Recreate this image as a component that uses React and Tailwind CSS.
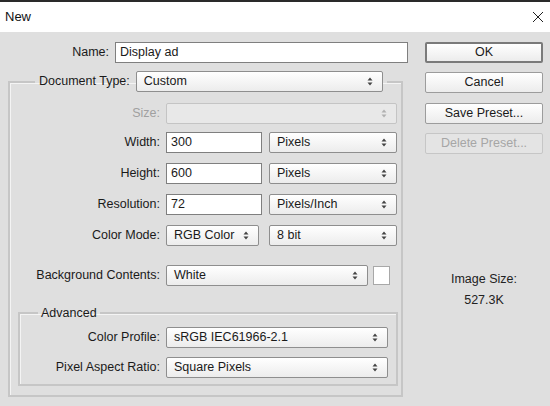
import React from 'react';

const font = { fontFamily: '"Liberation Sans", Arial, sans-serif' };

const Arrows = ({ dim }) => (
  <svg width="6" height="9" viewBox="0 0 6 9" className="shrink-0">
    <path d="M3 0.5 L5.5 3.5 L0.5 3.5 Z M3 8.5 L5.5 5.5 L0.5 5.5 Z" fill={dim ? '#b0b0b0' : '#444'} />
  </svg>
);

const Select = ({ value, w, disabled }) => (
  <div
    className={`h-[21px] ${w} flex items-center justify-between pl-[7px] pr-[9px] border rounded-[2px] ${
      disabled
        ? 'border-[#c4c4c4] bg-[#e8e8e8]'
        : 'border-[#8e8e8e] bg-gradient-to-b from-white to-[#ececec]'
    } text-[12.5px] text-[#1a1a1a]`}
  >
    <span>{value}</span>
    <Arrows dim={disabled} />
  </div>
);

const Input = ({ value, w }) => (
  <div className={`h-[21px] ${w} flex items-center px-[4px] bg-white border border-[#7f7f7f] text-[12.5px] text-[#1a1a1a]`}>
    {value}
  </div>
);

const Row = ({ label, labelW, children, className = '', dim }) => (
  <div className={`flex items-center ${className}`}>
    <div className={`${labelW} text-right pr-[6px] text-[12.5px] ${dim ? 'text-[#a0a0a0]' : 'text-[#1a1a1a]'}`}>{label}</div>
    {children}
  </div>
);

const Button = ({ children, primary, disabled, className = '' }) => (
  <div
    className={`h-[21px] w-[118px] flex items-center justify-center text-[12.5px] rounded-[2px] ${
      primary
        ? 'border-2 border-[#7a7a7a] bg-gradient-to-b from-white to-[#ececec] text-[#1a1a1a]'
        : disabled
        ? 'border border-[#c6c6c6] bg-[#e4e4e4] text-[#a6a6a6]'
        : 'border border-[#9c9c9c] bg-gradient-to-b from-white to-[#ececec] text-[#1a1a1a]'
    } ${className}`}
  >
    {children}
  </div>
);

export default function App() {
  return (
    <div className="w-[550px] h-[406px] overflow-hidden bg-[#dfdfdf] flex flex-col" style={font}>
      {/* title bar */}
      <div className="h-[32px] shrink-0 bg-white border-t-2 border-[#2a2a2a] flex items-center justify-between pl-[5px] pr-[6px]">
        <span className="text-[13px] text-[#111]">New</span>
        <svg width="12" height="12" viewBox="0 0 12 12">
          <path d="M1 1 L11 11 M11 1 L1 11" stroke="#222" strokeWidth="1" />
        </svg>
      </div>

      <div className="flex pt-[10px]">
        {/* left column */}
        <div className="w-[408px] flex flex-col">
          <Row label="Name:" labelW="w-[115px]">
            <Input value="Display ad" w="w-[293px]" />
          </Row>

          <fieldset className="ml-[8px] mt-[8px] w-[395px] border-2 border-[#c6c6c6] shadow-[inset_1px_1px_0_#f4f4f4] pb-[9px]">
            <legend className="ml-[25px] px-[4px] flex items-center">
              <span className="text-[12.5px] text-[#1a1a1a] pr-[6px]">Document Type:</span>
              <Select value="Custom" w="w-[247px]" />
            </legend>

            <Row label="Size:" labelW="w-[156px]" className="mt-[11px]" dim>
              <Select value="" w="w-[231px]" disabled />
            </Row>
            <Row label="Width:" labelW="w-[156px]" className="mt-[8px]">
              <Input value="300" w="w-[96px]" />
              <div className="ml-[7px]"><Select value="Pixels" w="w-[128px]" /></div>
            </Row>
            <Row label="Height:" labelW="w-[156px]" className="mt-[10px]">
              <Input value="600" w="w-[96px]" />
              <div className="ml-[7px]"><Select value="Pixels" w="w-[128px]" /></div>
            </Row>
            <Row label="Resolution:" labelW="w-[156px]" className="mt-[10px]">
              <Input value="72" w="w-[96px]" />
              <div className="ml-[7px]"><Select value="Pixels/Inch" w="w-[128px]" /></div>
            </Row>
            <Row label="Color Mode:" labelW="w-[156px]" className="mt-[10px]">
              <Select value="RGB Color" w="w-[93px]" />
              <div className="ml-[10px]"><Select value="8 bit" w="w-[128px]" /></div>
            </Row>
            <Row label="Background Contents:" labelW="w-[156px]" className="mt-[19px]">
              <Select value="White" w="w-[202px]" />
              <div className="ml-[5px] w-[17px] h-[19px] bg-white border border-[#a8a8a8]" />
            </Row>

            <fieldset className="ml-[8px] mr-[3px] mt-[20px] border-2 border-[#c6c6c6] shadow-[inset_1px_1px_0_#f4f4f4] pb-[6px]">
              <legend className="ml-[18px] px-[3px] text-[12.5px] text-[#1a1a1a] leading-[14px]">Advanced</legend>
              <Row label="Color Profile:" labelW="w-[146px]" className="mt-[7px]">
                <Select value="sRGB IEC61966-2.1" w="w-[222px]" />
              </Row>
              <Row label="Pixel Aspect Ratio:" labelW="w-[146px]" className="mt-[9px]">
                <Select value="Square Pixels" w="w-[222px]" />
              </Row>
            </fieldset>
          </fieldset>
        </div>

        {/* right column */}
        <div className="ml-[17px] flex flex-col">
          <Button primary>OK</Button>
          <Button className="mt-[9px]">Cancel</Button>
          <Button className="mt-[10px]">Save Preset...</Button>
          <Button className="mt-[9px]" disabled>Delete Preset...</Button>
          <div className="mt-[115px] flex flex-col items-center text-[12.5px] text-[#222] leading-[21px]">
            <span>Image Size:</span>
            <span>527.3K</span>
          </div>
        </div>
      </div>
    </div>
  );
}
